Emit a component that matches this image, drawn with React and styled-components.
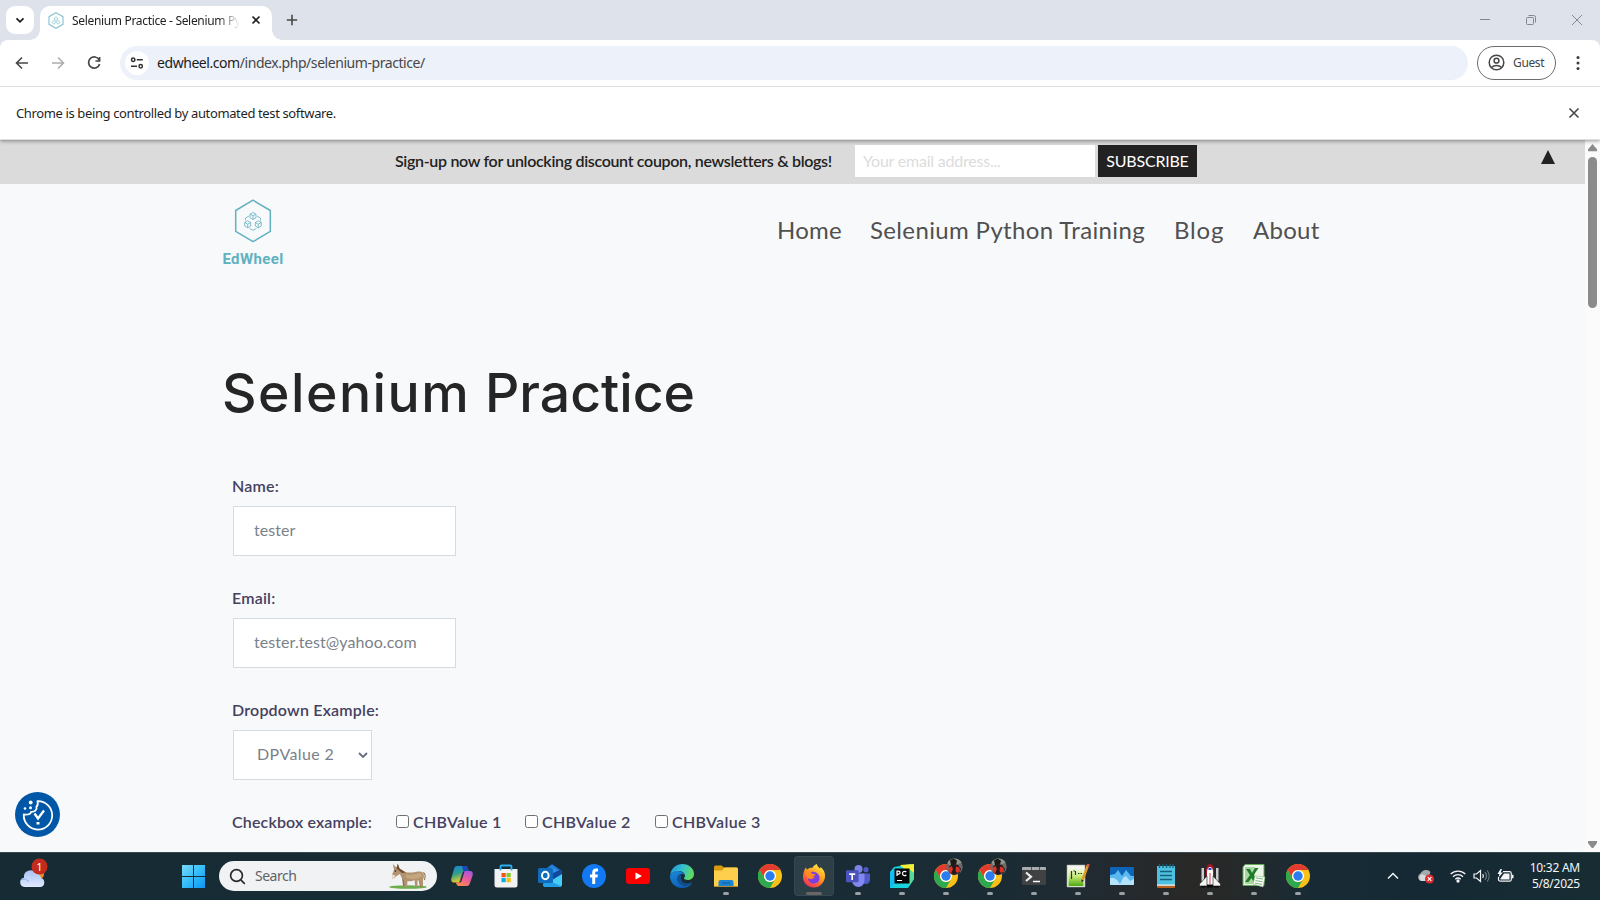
import React from "react";
import styled, { createGlobalStyle } from "styled-components";

const Global = createGlobalStyle`
  *, *::before, *::after { box-sizing: border-box; }
  html, body { margin: 0; padding: 0; overflow: hidden; }
  body { font-family: "Lato", "Liberation Sans", sans-serif; font-variant-ligatures: none; }
  svg { display: block; flex: none; }
`;

const ui = `"Noto Sans", "Open Sans", sans-serif`;

const Screen = styled.div`
  width: 1600px;
  height: 900px;
  display: flex;
  flex-direction: column;
  overflow: hidden;
  background: #f8f9fb;
`;

/* ---------- browser chrome ---------- */

const TabStrip = styled.header`
  height: 40px;
  flex: none;
  display: flex;
  align-items: flex-start;
  padding: 6px 0 0 6px;
  background: #dee2ea;
`;

const TabSearch = styled.button`
  width: 28px;
  height: 28px;
  border: 0;
  padding: 0;
  border-radius: 9px;
  background: #fff;
  display: grid;
  place-items: center;
`;

const Tab = styled.div`
  position: relative;
  width: 232px;
  height: 34px;
  margin-left: 6px;
  padding: 0 8px 6px;
  display: flex;
  align-items: center;
  border-radius: 10px 10px 0 0;
  background: #fff;

  &::before, &::after {
    content: "";
    position: absolute;
    bottom: 0;
    width: 10px;
    height: 10px;
  }
  &::before {
    left: -10px;
    background: radial-gradient(circle at 0 0, transparent 9.5px, #fff 10px);
  }
  &::after {
    right: -10px;
    background: radial-gradient(circle at 100% 0, transparent 9.5px, #fff 10px);
  }
`;

const TabTitle = styled.span`
  width: 167px;
  margin: 1px 0 0 8px;
  white-space: nowrap;
  font: 12px/18px ${ui};
  letter-spacing: -0.33px;
  color: #1f1f1f;
  mask-image: linear-gradient(90deg, #000 146px, transparent 168px);
`;

const TabClose = styled.span`
  margin-left: 12px;
`;

const NewTab = styled.span`
  margin: 8px 0 0 14px;
`;

const WindowButtons = styled.div`
  margin: 8px 17px 0 auto;
  display: flex;
  gap: 34px;
`;

const ToolbarWrap = styled.div`
  position: relative;
  z-index: 2;
  background: #dee2ea;
`;

const Toolbar = styled.div`
  height: 47px;
  display: flex;
  align-items: center;
  padding: 0 12px 1px;
  border-bottom: 1px solid #dcdfe2;
  border-radius: 8px 8px 0 0;
  background: #fff;
`;

const NavButtons = styled.div`
  display: flex;
  gap: 16px;
`;

const Omnibox = styled.div`
  width: 1348px;
  height: 34px;
  margin-left: 16px;
  padding-left: 5px;
  display: flex;
  align-items: center;
  border-radius: 17px;
  background: #ecf1fa;
`;

const SiteInfo = styled.span`
  width: 24px;
  height: 24px;
  border-radius: 50%;
  background: #fff;
  display: grid;
  place-items: center;
`;

const Url = styled.span`
  margin: 1px 0 0 8px;
  font: 14px/20px ${ui};
  letter-spacing: -0.44px;
  color: #474747;

  b { font-weight: 400; color: #1b1b1b; }
`;

const Profile = styled.div`
  width: 79px;
  height: 34px;
  margin-left: 9px;
  padding-left: 10px;
  display: flex;
  align-items: center;
  gap: 8px;
  border: 1px solid #6c6c6c;
  border-radius: 17px;
  font: 12px/18px ${ui};
  letter-spacing: -0.35px;
  color: #444;
`;

const MenuDots = styled.span`
  margin-left: 14px;
`;

const InfoBar = styled.div`
  position: relative;
  z-index: 1;
  height: 53px;
  flex: none;
  padding: 0 18px 1px 16px;
  display: flex;
  align-items: center;
  justify-content: space-between;
  border-bottom: 1px solid #dfe0df;
  background: #fff;
  box-shadow: 0 1px 4px rgba(0, 0, 0, 0.42);
  font: 13px/20px ${ui};
  letter-spacing: -0.37px;
  color: #1f1f1f;
`;

/* ---------- web page ---------- */

const Viewport = styled.div`
  flex: 1;
  min-height: 0;
  display: flex;
`;

const Page = styled.main`
  position: relative;
  width: 1585px;
  display: flex;
  flex-direction: column;
`;

const SignupBar = styled.section`
  height: 44px;
  flex: none;
  display: flex;
  align-items: flex-start;
  padding: 5px 30px 0 395px;
  background: #dbdbdb;
`;

const SignupText = styled.span`
  width: 460px;
  font-size: 16px;
  line-height: 31px;
  font-weight: 600;
  letter-spacing: -0.32px;
  color: #222;
  white-space: nowrap;
`;

const SignupInput = styled.input`
  width: 240px;
  height: 32px;
  border: 0;
  padding: 0 8px 1px;
  background: #fff;
  font: 16px "Lato", sans-serif;
  letter-spacing: -0.21px;

  &::placeholder { color: #dcdcdc; opacity: 1; }
`;

const Subscribe = styled.button`
  width: 99px;
  height: 32px;
  margin-left: 3px;
  border: 0;
  padding: 0 0 2px;
  background: #222;
  color: #fff;
  font: 16px "Lato", sans-serif;
  letter-spacing: -0.22px;
`;

const Collapse = styled.span`
  margin: 5px 0 0 auto;
`;

const SiteHeader = styled.div`
  height: 106px;
  flex: none;
  display: flex;
  justify-content: space-between;
  padding: 15px 265px 0 222px;
`;

const Brand = styled.a`
  display: flex;
  flex-direction: column;
  align-items: center;
  width: 62px;
  font: 700 15px/18px "Roboto", sans-serif;
  letter-spacing: 0.4px;
  color: #61b1c1;

  svg { margin-bottom: 7px; }
`;

const Nav = styled.nav`
  display: flex;
  align-items: center;
  height: 32px;
  margin-top: 14px;
  font-size: 24px;
  color: #505050;
  white-space: nowrap;
`;

const NavLink = styled.a`
  width: ${(p) => p.$width}px;
  letter-spacing: ${(p) => p.$track}px;
`;

const Title = styled.h1`
  display: flex;
  margin: 71px 0 0 222px;
  font: 500 53.5px/64px "Inter", sans-serif;
  color: #252525;
`;

const TitleWord = styled.span`
  width: ${(p) => p.$width}px;
  letter-spacing: ${(p) => p.$track}px;
  white-space: pre;
`;

const Form = styled.form`
  margin: 51px 0 0 233px;
  display: flex;
  flex-direction: column;
  align-items: flex-start;
`;

const Label = styled.label`
  font-size: 16px;
  line-height: 20px;
  font-weight: 600;
  letter-spacing: ${(p) => p.$track || 0.2}px;
  color: #45415f;
  white-space: nowrap;
`;

const Field = styled.div`
  display: flex;
  flex-direction: column;
  align-items: flex-start;
  gap: 10px;
  height: 112px;

  ${Label} { margin-left: -1px; }
`;

const TextBox = styled.input`
  width: 223px;
  height: 50px;
  border: 1px solid #d8dbde;
  padding: 0 19px 3px 20px;
  background: #fff;
  font: 16px "Lato", sans-serif;
  letter-spacing: 0.08px;
  color: #7b818a;
`;

const SelectBox = styled.div`
  width: 139px;
  height: 50px;
  border: 1px solid #d8dbde;
  padding: 0 3px 3px 23px;
  display: flex;
  align-items: center;
  justify-content: space-between;
  background: #fff;
  font-size: 16px;
  letter-spacing: 0.38px;
  color: #7b818a;

  svg { margin-top: 3px; }
`;

const CheckRow = styled.div`
  display: flex;
  align-items: center;
  margin-left: -1px;
`;

const CheckItem = styled.span`
  display: flex;
  align-items: center;
  gap: 4px;
  width: ${(p) => p.$width}px;
`;

const CheckCaption = styled.span`
  width: 164px;
`;

const Box = styled.span`
  width: 13px;
  height: 13px;
  flex: none;
  margin-top: -2px;
  border: 1px solid #6f6f6f;
  border-radius: 2.5px;
  background: #fff;
`;

const CookieButton = styled.div`
  position: absolute;
  left: 15px;
  top: 652px;
  width: 45px;
  height: 45px;
`;

const Scrollbar = styled.div`
  width: 15px;
  padding: 4px 3px 4px;
  display: flex;
  flex-direction: column;
  align-items: center;
  background: #fbfbfc;
`;

const Thumb = styled.div`
  width: 9px;
  height: 151px;
  margin: 5px 0 auto;
  border-radius: 5px;
  background: #8b8b8b;
`;

/* ---------- taskbar ---------- */

const Taskbar = styled.footer`
  height: 48px;
  flex: none;
  display: flex;
  align-items: center;
  padding: 0 19px 1px 18px;
  border-top: 1px solid #3a4a50;
  background: linear-gradient(90deg, #172b35 0, #182c35 640px, #1a2b34 1000px, #222a30 1110px, #292827 1190px, #262929 1230px, #182b35 1310px, #152934 1420px, #172c33 1600px);
`;

const Weather = styled.div`
  width: 164px;
  padding-bottom: 6px;
`;

const SearchPill = styled.div`
  width: 218px;
  height: 30px;
  margin-left: 14px;
  padding: 0 9px 0 10px;
  display: flex;
  align-items: center;
  border-radius: 15px;
  background: #f1f2f4;
  overflow: hidden;

  span {
    margin: 0 auto 0 9px;
    font: 14px/20px ${ui};
    letter-spacing: -0.5px;
    color: #616466;
  }
`;

const Apps = styled.div`
  display: flex;
  margin-left: 5px;
`;

const AppSlot = styled.div`
  position: relative;
  width: 40px;
  height: 40px;
  margin-right: 4px;
  display: grid;
  place-items: center;
  border-radius: 4px;
  background: ${(p) => (p.$active ? "rgba(255,255,255,0.09)" : "transparent")};
  box-shadow: ${(p) => (p.$active ? "inset 0 0 0 1px rgba(255,255,255,0.05)" : "none")};

  &::after {
    content: "";
    display: ${(p) => (p.$running ? "block" : "none")};
    position: absolute;
    bottom: 1px;
    left: 50%;
    width: ${(p) => (p.$active ? 16 : 6)}px;
    height: 3px;
    transform: translateX(-50%);
    border-radius: 2px;
    background: ${(p) => (p.$active ? "#6b6664" : "#9aa0a3")};
  }
`;

const Tray = styled.div`
  margin-left: auto;
  display: flex;
  align-items: center;
`;

const TrayIcon = styled.span`
  margin-right: ${(p) => p.$gap}px;
`;

const Clock = styled.div`
  width: 61px;
  padding: 0 1px 1px 0;
  text-align: right;
  font: 12px/16px ${ui};
  letter-spacing: -0.25px;
  color: #f4f6f7;
`;

/* ---------- drawings ---------- */

const Cubes = ({ size = [38, 44] }) => (
  <svg width={size[0]} height={size[1]} viewBox="0 0 38 44" fill="none" stroke="#61b1c1">
    <path d="M19 1.2 36.3 11.5V32.3L19 42.6 1.7 32.3V11.5Z" strokeWidth="1.5" />
    <g strokeWidth=".8">
      <path d="M19 13.500l3 1.700v3.500L19 20.500l-3-1.800v-3.500zM16 15.200l3 1.700 3-1.700M19 16.900V20.500" />
      <path d="M13.700 21.800l3 1.700v3.500l-3 1.800-3-1.800v-3.500zM10.700 23.500l3 1.700 3-1.700M13.700 25.200v3.600" />
      <path d="M24.300 21.800l3 1.700v3.500l-3 1.800-3-1.800v-3.500zM21.300 23.500l3 1.700 3-1.700M24.300 25.200v3.600" />
      <path d="M15 17l-3.500 2v2.500M23 17l3.500 2v2.500M15.500 29.500L19 31.300l3.500-1.800" />
    </g>
  </svg>
);

const Favicon = () => (
  <svg width="16" height="17" viewBox="0 0 16 17" fill="none" stroke="#8cc6d2">
    <path d="M8 .8L15 4.600v7.800L8 16.200 1 12.400V4.600z" strokeWidth="1.200" />
    <path d="M8 5l1.500 1v1.500L8 8.500 6.500 7.500V6zM5.800 8.500l1.500 1V11l-1.500 1-1.500-1V9.500zM10.200 8.500l1.500 1V11l-1.500 1-1.500-1V9.500z" strokeWidth=".8" />
  </svg>
);

const Stroke = ({ s, d, c = "#474747", w = 1.5, ...rest }) => (
  <svg width={s} height={s} viewBox={`0 0 ${s} ${s}`} fill="none" stroke={c} strokeWidth={w} {...rest}>
    <path d={d} />
  </svg>
);

const Icon = ({ children }) => <svg width="24" height="24" viewBox="0 0 24 24">{children}</svg>;

const ChromeShape = () => (
  <>
    <circle cx="12" cy="12" r="12" fill="#fbc116" />
    <path d="M1.600 6A12 12 0 0 1 22.400 6H12a6 6 0 0 0-5.200 9z" fill="#e33b2e" />
    <path d="M1.600 6A12 12 0 0 0 12 24l5.200-9A6 6 0 0 1 6.800 15z" fill="#2da94f" />
    <circle cx="12" cy="12" r="6" fill="#fff" />
    <circle cx="12" cy="12" r="4.700" fill="#2a7cf0" />
  </>
);

const ChromeIcon = () => <Icon><ChromeShape /></Icon>;

const ChromeProfileIcon = () => (
  <svg width="24" height="24" viewBox="0 0 24 24" overflow="visible">
    <ChromeShape />
    <circle cx="20.500" cy="3" r="8.200" fill="#6f6a66" />
    <path d="M13.500-1.500a8.200 8.200 0 0 1 14.200 0l-3 1.500-5 1-4 1z" fill="#8d9488" />
    <path d="M16-4l4-1.200 3 2-1 4-5 .5z" fill="#1d1719" />
    <path d="M15 2l4-2 5 1 3 4-1.500 4-6 2-4-2.500z" fill="#241a1c" />
    <path d="M14.500 3.500l3-1.500 1.500 3-2 4.500-2-2zM22 2.500l3.500 1 .5 4-3 1.500-1.500-2z" fill="#d8322a" />
  </svg>
);

const CopilotIcon = () => (
  <Icon>
    <defs>
      <linearGradient id="cpa" x1="0" y1="0" x2=".3" y2="1"><stop stopColor="#1685d8" /><stop offset=".5" stopColor="#2f9d8c" /><stop offset="1" stopColor="#e7cf26" /></linearGradient>
      <linearGradient id="cpb" x1=".8" y1="0" x2=".3" y2="1"><stop stopColor="#a457e0" /><stop offset=".5" stopColor="#e85ba0" /><stop offset="1" stopColor="#fb8a4b" /></linearGradient>
    </defs>
    <path d="M7 2h8c2 0 2.500 1.500 3 3l.7 2h-3c-2 0-3 1-3.500 2.500L10 16c-.5 2-1.500 2.500-3.500 2.500H4C1.500 18.500.7 16.500 1.400 14L4 5c.6-2 1.500-3 3-3z" fill="url(#cpa)" />
    <path d="M12 2h3c2 0 2.500 1.500 3 3l.7 2h-3c-1 0-1.700.3-2.300.8z" fill="#1c49bd" />
    <path d="M17 22H9c-2 0-2.500-1.500-3-3l-.2-.6h1c2 0 3-1 3.400-2.500L12.500 9.500C13 7.700 14.500 7 16 7h4c2.500 0 3.300 2 2.600 4.500L20 19c-.6 2-1.500 3-3 3z" fill="url(#cpb)" />
    <path d="M14.500 7.500L11.500 17c-.5 1.500-1.500 1.800-3 1.500 1 0 1.500-1 2-2.600L12.500 9.500c.4-1.200 1-1.800 2-2z" fill="#1c2f3c" />
  </Icon>
);

const StoreIcon = () => (
  <Icon>
    <path d="M6.500 7V2.600C6.500 1.800 7 1.500 7.700 1.500h8.600c.7 0 1.200.3 1.200 1.100V7" fill="none" stroke="#29b0ee" strokeWidth="1.800" />
    <path d="M.5 5h23v16a2.500 2.500 0 0 1-2.500 2.500H3A2.500 2.500 0 0 1 .5 21z" fill="#f2f2f2" />
    <path d="M5.600 5h1.800v1.500H5.600zM16.600 5h1.800v1.500h-1.800z" fill="#29b0ee" />
    <path d="M7.500 9h4.200v4.200H7.500z" fill="#f1511b" /><path d="M12.500 9h4.200v4.200h-4.200z" fill="#80cc28" />
    <path d="M7.500 14h4.200v4.200H7.500z" fill="#00adef" /><path d="M12.500 14h4.200v4.200h-4.200z" fill="#fbbc09" />
  </Icon>
);

const OutlookIcon = () => (
  <Icon>
    <path d="M4 8L13 .8c.7-.5 1.300-.5 2 0L23 6.500c.6.4 1 1 1 1.800V20a3 3 0 0 1-3 3H8a3 3 0 0 1-3-3z" fill="#1d7ad6" />
    <path d="M8 6.500L14 2.500l6 4-8 6z" fill="#2f8fe2" />
    <path d="M10 17L24 9V20a3 3 0 0 1-3 3H8a3 3 0 0 1-3-2.500z" fill="#45cdf5" />
    <path d="M15 9L23 5.500l1 2.500v2l-9 5.500z" fill="#11489c" />
    <path d="M10 16l13 6.200a3 3 0 0 1-2 .8H8a3 3 0 0 1-3-2.500z" fill="#209ee6" />
    <rect x="0" y="4" width="15" height="15" rx="1.500" fill="#0f6cbd" />
    <ellipse cx="7.300" cy="11.500" rx="3.300" ry="3.700" fill="none" stroke="#fff" strokeWidth="2" />
  </Icon>
);

const FacebookIcon = () => (
  <Icon>
    <circle cx="12" cy="12" r="12" fill="#1279f3" />
    <path d="M10.200 20v-6.400H8v-3h2.200V8.700c0-2.900 1.400-4.200 4-4.200.7 0 1.300.1 1.800.2v2.800h-1.300c-1.200 0-1.500.5-1.500 1.600v1.500h2.700l-.5 3h-2.200V20z" fill="#fff" />
  </Icon>
);

const YouTubeIcon = () => (
  <Icon>
    <rect x="0" y="4" width="24" height="16" rx="3" fill="#fd0000" />
    <path d="M9.500 8.500l6.500 3.500-6.500 3.500z" fill="#fff" />
  </Icon>
);

const EdgeIcon = () => (
  <Icon>
    <defs>
      <linearGradient id="ega" x1="0" y1=".2" x2="1" y2=".5"><stop stopColor="#2195d8" /><stop offset=".5" stopColor="#35c1d0" /><stop offset="1" stopColor="#62dc58" /></linearGradient>
      <linearGradient id="egb" x1="0" y1="0" x2=".6" y2="1"><stop stopColor="#1a8ad8" /><stop offset="1" stopColor="#0d5cb4" /></linearGradient>
    </defs>
    <path d="M.2 10.500C1.500 4 6.500 0 12.500 0 19 0 24 4.500 24 10c0 3.500-2.700 6-6 6-2.500 0-4-.8-4-1.700 0-.6 1-1 1-2.700C15 9 12 7 8.500 7 5 7 2 8.500.2 10.500z" fill="url(#ega)" />
    <path d="M0 12c1-3.500 4.500-5.200 8-5 3.600.2 6.500 2 7 4.500-.5-.8-1.500-1.500-3-1.500-3 0-4.500 2.500-4.500 5 0 4 4 6.500 8 6.500 2.500 0 5-.8 6.500-2C20 22.500 16 24 12 24 5 24 0 18.500 0 12z" fill="url(#egb)" />
    <path d="M11 10c-2.500 1-4 3-3.500 5.500.5 4 4 6 8 6 2.500 0 5-.8 6.500-2 .4-.8 0-1.200-.7-.9-5 2-10.300.4-10.300-4.600 0-1.500.5-3 0-4z" fill="#124f92" />
  </Icon>
);

const FolderIcon = () => (
  <Icon>
    <path d="M0 3a1.500 1.500 0 0 1 1.500-1.500h6l2.500 2h12.500A1.500 1.500 0 0 1 24 5v3H0z" fill="#d99a0d" />
    <path d="M0 6.500h8l2.500-3h12A1.500 1.500 0 0 1 24 5v17.500H0z" fill="#fdcf4c" />
    <path d="M4.500 22.500V18a2 2 0 0 1 2-2h11a2 2 0 0 1 2 2v4.500z" fill="#1b84d3" />
    <path d="M8 19h8" stroke="#0a5a9e" strokeWidth="1" />
    <path d="M0 22h24v.8H0z" fill="#c8921a" />
  </Icon>
);

const FirefoxIcon = () => (
  <Icon>
    <defs>
      <linearGradient id="ffa" x1=".8" y1="0" x2=".2" y2="1"><stop stopColor="#fff04a" /><stop offset=".45" stopColor="#ff9a1f" /><stop offset="1" stopColor="#f5245e" /></linearGradient>
    </defs>
    <path d="M2.500 6c.3-1.200.8-2 1.500-2.500.2 1 .6 1.500 1 2C7 4 9 3.700 10.500 3.800 11.500 1.500 13.500.3 15 0c-.3 1.800 1.500 3 3 4.500.3-.5.400-1 .3-1.500C21.500 5 23.300 8.500 23 12.500 22.600 18.500 18 23.500 12 23.500S1 19 1 13c0-2.500.5-4.700 1.500-7z" fill="url(#ffa)" />
    <path d="M9 8c4-1 8.500 1.500 8.500 6S14 19.500 11.500 19.500 6 17.500 6 14c1 1 2.500 1.500 4 1 1-.4 1.700-1.300 2.800-1.600C12 12.500 9.500 12.500 8.500 11.500 8 10.500 8.300 9 9 8z" fill="#7a3fe0" />
    <path d="M3 9c2-1.500 5-1.500 6.500-.5 0 1 1.500 1.700 4 1.800-.2 1.500-2 1.500-3 2.500-.4.600-.2 1.500-1.500 1.700-1.700.2-3-.5-3-.5z" fill="#ff8a22" />
  </Icon>
);

const TeamsIcon = () => (
  <Icon>
    <circle cx="12.500" cy="5" r="4" fill="#7b83eb" />
    <circle cx="20" cy="5.700" r="2.600" fill="#5059c9" />
    <path d="M17 9.500h7v6.500a4 4 0 0 1-6 3.500z" fill="#5059c9" />
    <path d="M6 9.500h12.500v7a6.200 6.200 0 0 1-12.500.5z" fill="#8188ee" />
    <rect x="0" y="6.200" width="12.500" height="12" rx="1" fill="#4b53bc" />
    <path d="M3.200 9.300h6v1.600H7V16H5.400v-5.100H3.200z" fill="#fff" />
  </Icon>
);

const PyCharmIcon = () => (
  <Icon>
    <path d="M4 3L21 0l3 4v11l-6 9H0V8z" fill="#18d3dc" />
    <path d="M10 1L24 0v10l-5-1z" fill="#f5ee35" />
    <path d="M24 9v6l-5 7V5z" fill="#53dc98" />
    <path d="M0 9l5-5v16l-5 4z" fill="#12bdf2" />
    <rect x="4.500" y="4.500" width="15" height="15" fill="#060606" />
    <path d="M7 12V7.200h1.600a1.400 1.400 0 0 1 0 2.900H7M16.300 8a2.200 2.200 0 1 0 0 3M7 16.500h5" fill="none" stroke="#fff" strokeWidth="1.200" />
  </Icon>
);

const TerminalIcon = () => (
  <Icon>
    <rect x="0" y="3" width="24" height="18" rx="1.200" fill="#3f4143" />
    <path d="M0 6V4.200A1.200 1.200 0 0 1 1.200 3h21.600A1.200 1.200 0 0 1 24 4.200V6z" fill="#a9acae" />
    <path d="M9 3h1v3H9zM17 3h1v3h-1z" fill="#55585a" />
    <path d="M4 8.500l5 4.300-5 4.200" fill="none" stroke="#ececec" strokeWidth="2.200" />
    <path d="M11 17.500h7" stroke="#fff" strokeWidth="1.500" />
  </Icon>
);

const EditorIcon = () => (
  <Icon>
    <defs><linearGradient id="npp" x1="0" y1="0" x2="0" y2="1"><stop stopColor="#f5faec" /><stop offset=".45" stopColor="#c8ec78" /><stop offset="1" stopColor="#4ca80e" /></linearGradient></defs>
    <path d="M1 1h18v22H1z" fill="#f3f5f0" stroke="#9fa69a" strokeWidth=".6" />
    <path d="M2.500 4h15v18h-15z" fill="url(#npp)" />
    <path d="M5.500 7v8M7.500 7h1.500M9.500 7v4M12 9.500h1.500M14.500 9.500H16" stroke="#30372a" strokeWidth="1.200" />
    <path d="M22 1l-5.500 15" stroke="#e29a25" strokeWidth="2.600" />
    <path d="M22.500 0l-.8 2.500" stroke="#d35a52" strokeWidth="2.600" />
    <path d="M15.300 15.500l.5 3 2-2z" fill="#3c2d18" />
  </Icon>
);

const MonitorIcon = () => (
  <Icon>
    <rect x="0" y="3" width="24" height="18" rx="1" fill="#0d65b8" />
    <path d="M0 11l5-1 3-4 4 6 4-6 5 6 3 0v8a1 1 0 0 1-1 1H1a1 1 0 0 1-1-1z" fill="#5bb8f1" />
    <path d="M0 14l4 0 3 2 3 4 3-6 3-2 4 5 4-2v5a1 1 0 0 1-1 1H1a1 1 0 0 1-1-1z" fill="#b5e3fb" />
  </Icon>
);

const NotepadIcon = () => (
  <Icon>
    <path d="M3 2h18v20H3z" fill="#4fc1e0" />
    <path d="M3 21h18v2a1 1 0 0 1-1 1H4a1 1 0 0 1-1-1z" fill="#b5601c" />
    <path d="M3 20.500h18v1.300H3z" fill="#f0f4f5" />
    <path d="M5.500 0v4M9 0v4M12.500 0v4M16 0v4M19 0v4" stroke="#14637d" strokeWidth="1.300" />
    <path d="M6 7.500h12M6 11.500h12M6 15.500h12" stroke="#17617c" strokeWidth="1.400" />
  </Icon>
);

const ShuttleIcon = () => (
  <Icon>
    <path d="M3.500 4H6v13H3.500zM18 4h2.500v13H18z" fill="#c9ccd0" />
    <path d="M8 6c0-4 2-6 4-6s4 2 4 6v13H8z" fill="#a3152a" />
    <path d="M9 8c0-3.500 1.500-5 3-5s3 1.500 3 5v13H9z" fill="#fff" />
    <path d="M9 12l-7.500 8v2H9zM15 12l7.500 8v2H15z" fill="#f4f4f4" stroke="#151515" strokeWidth=".6" />
    <path d="M10.500 4h3v2h-3z" fill="#2b48c2" />
    <path d="M12 9v11" stroke="#c93a44" strokeWidth="1" />
    <path d="M9 20.500h6v3H9zM3 22h5v1.500H3zM16 22h5v1.500h-5z" fill="#0b0b0b" />
  </Icon>
);

const ExcelIcon = () => (
  <Icon>
    <path d="M3 .5h19v21H1V3z" fill="#eaf5e6" stroke="#63a95c" strokeWidth="1" />
    <path d="M3 3h10v17H3z" fill="#a7d69f" />
    <path d="M4 5h4l2 4 3-5h3.500l-4.800 7 4 7h-4l-2.200-4-3 4H3l5-7z" fill="#1f7a2c" />
    <path d="M13 12l10 1-2 10-10-3z" fill="#f7faf6" stroke="#8db98a" strokeWidth=".6" />
    <path d="M14 14l7 1M13.500 16.500l7 1.300M13 19l7 1.500" stroke="#72b26f" strokeWidth=".9" />
  </Icon>
);

const WindowsIcon = () => (
  <svg width="23" height="23" viewBox="0 0 23 23">
    <defs><linearGradient id="win" gradientUnits="userSpaceOnUse" x1="0" y1="0" x2="23" y2="23"><stop stopColor="#7ad9fb" /><stop offset=".5" stopColor="#35bdf9" /><stop offset="1" stopColor="#0a94f5" /></linearGradient></defs>
    <path d="M0 0h11v11H0zM12 0h11v11H12zM0 12h11v11H0zM12 12h11v11H12z" fill="url(#win)" />
  </svg>
);

const CloudIcon = () => (
  <svg width="30" height="34" viewBox="0 0 30 34">
    <defs><linearGradient id="cld" x1="0" y1="0" x2="0" y2="1"><stop stopColor="#a9c4f5" /><stop offset="1" stopColor="#dfe8fb" /></linearGradient></defs>
    <circle cx="20" cy="18" r="6" fill="#f08c22" />
    <path d="M6.500 31a4.700 4.700 0 0 1-.5-9.300 6.500 6.500 0 0 1 12-4.200 5 5 0 0 1 5 4.500A4.600 4.600 0 0 1 22 31z" fill="url(#cld)" />
    <path d="M3 23.500a7 7 0 0 1 8 2" stroke="#8eaeea" strokeWidth="1" fill="none" />
    <circle cx="21.500" cy="10.500" r="8" fill="#c42b1c" />
    <text x="21.500" y="14.500" textAnchor="middle" fontFamily="Noto Sans, sans-serif" fontSize="11" fill="#fff">1</text>
  </svg>
);

const DonkeyIcon = () => (
  <svg width="40" height="26" viewBox="0 0 40 26">
    <ellipse cx="20" cy="24" rx="19" ry="1.800" fill="#6fae4e" />
    <path d="M30.500 16l1.500 8h2l.5-8z" fill="#8f7152" />
    <path d="M14 15l1.200 8.500h2.200l.4-7z" fill="#8f7152" />
    <path d="M6 6.500L4.800 1l3.700 3.500L9.800.5 11.500 5.500l6 3.500c4 1.300 9 .2 13-.5 3.500-.5 5.500 1.500 5.500 5L35 17v6.500h-2.200L31 17.500h-1.500v6h-2.300L26.500 17c-2 1.200-5 1.500-7 1l-.5 6h-2.500l-.7-7c-1.800-1.500-3.300-4-3.800-6L8.500 13l-2.500 2.500H4.200L4 12z" fill="#b2936f" />
    <path d="M18 11.500c5 1 9 0 13-1.500 2 0 3 1.500 3 3.500-5 3-12 3-16 1z" fill="#c4a680" />
    <path d="M9.800.8L11.500 5.500l6 4-3.500.5L8.500 5.500z" fill="#6c4e38" />
    <path d="M4 11.500l3.500 1L6 15.500H4.200z" fill="#ecdfcc" />
    <circle cx="7.500" cy="8" r=".8" fill="#2a1d16" />
    <path d="M35 9.500c2.500.5 2.500 4 1.500 7.500" stroke="#94724f" strokeWidth="1.100" fill="none" />
  </svg>
);

const CookieIcon = () => (
  <svg width="45" height="45" viewBox="0 0 45 45">
    <circle cx="22.500" cy="22.500" r="22.500" fill="#0057a8" />
    <path d="M22.500 9.200A14.200 14.200 0 1 1 8.800 22.500c4.500.3 7-.8 7.300-2.700 3.600.2 6.300-1.800 5.300-5 1.300-1 1.600-3.500 1.100-5.600z" fill="none" stroke="#fff" strokeWidth="1.800" strokeLinejoin="round" />
    <path d="M19.500 21.500l3.500 5 6-8" fill="none" stroke="#fff" strokeWidth="2.300" />
    <path d="M21.500 30h3v2.500h-3z" fill="#fff" />
    <circle cx="15.700" cy="10.500" r="1.900" fill="#fff" /><circle cx="10" cy="16.500" r="1.300" fill="#fff" /><circle cx="15.500" cy="15.800" r="1.500" fill="#fff" />
  </svg>
);

const navItems = [
  { text: "Home", width: 93, track: 0.2 },
  { text: "Selenium Python Training", width: 304, track: 0.36 },
  { text: "Blog", width: 79, track: 0.8 },
  { text: "About", width: 67, track: 0.25 },
];

const checks = [
  { text: "CHBValue 1", width: 129 },
  { text: "CHBValue 2", width: 130 },
  { text: "CHBValue 3", width: 130 },
];

const apps = [
  { Art: CopilotIcon }, { Art: StoreIcon }, { Art: OutlookIcon }, { Art: FacebookIcon },
  { Art: YouTubeIcon }, { Art: EdgeIcon }, { Art: FolderIcon, running: true }, { Art: ChromeIcon },
  { Art: FirefoxIcon, running: true, active: true }, { Art: TeamsIcon, running: true },
  { Art: PyCharmIcon, running: true }, { Art: ChromeProfileIcon, running: true },
  { Art: ChromeProfileIcon, running: true }, { Art: TerminalIcon, running: true },
  { Art: EditorIcon, running: true }, { Art: MonitorIcon, running: true },
  { Art: NotepadIcon, running: true }, { Art: ShuttleIcon, running: true },
  { Art: ExcelIcon, running: true }, { Art: ChromeIcon, running: true },
];

export default function App() {
  return (
    <Screen>
      <Global />
      <TabStrip>
        <TabSearch><Stroke s={12} d="M2.500 4.300L6 7.800l3.500-3.500" c="#1f1f1f" w={1.800} /></TabSearch>
        <Tab>
          <Favicon />
          <TabTitle>Selenium Practice - Selenium Py</TabTitle>
          <TabClose><Stroke s={10} d="M1.500 1.500l7 7M8.500 1.500L1.500 8.500" c="#1f1f1f" w={1.600} /></TabClose>
        </Tab>
        <NewTab><Stroke s={12} d="M6 .8v10.400M.8 6h10.400" w={1.600} /></NewTab>
        <WindowButtons>
          <Stroke s={12} d="M1 5.500h10" c="#848689" w={1} />
          <svg width="12" height="12" viewBox="0 0 12 12" fill="none" stroke="#848689">
            <rect x="1.500" y="3.500" width="7" height="7" rx="1" />
            <path d="M3.500 1.500h5.200a1.800 1.800 0 0 1 1.800 1.800V8.500" />
          </svg>
          <Stroke s={12} d="M1 1l10 10M11 1L1 11" c="#848689" w={1} />
        </WindowButtons>
      </TabStrip>
      <ToolbarWrap>
        <Toolbar>
          <NavButtons>
            <Stroke s={20} d="M16 10H5M10 4.500L4.500 10l5.500 5.500" w={1.600} />
            <Stroke s={20} d="M4 10h11M10 4.500l5.500 5.500-5.500 5.500" w={1.600} c="#adadad" />
            <Stroke s={20} d="M15.200 7A5.600 5.600 0 1 0 15.600 11M15.600 4v4h-4.200" w={1.700} />
          </NavButtons>
          <Omnibox>
            <SiteInfo>
              <svg width="14" height="12" viewBox="0 0 14 12" fill="none" stroke="#333" strokeWidth="1.500">
                <circle cx="3.200" cy="2.700" r="1.700" /><path d="M6.800 2.700H12.800M1 9.300h6" /><circle cx="10.700" cy="9.300" r="1.700" />
              </svg>
            </SiteInfo>
            <Url><b>edwheel.com</b>/index.php/selenium-practice/</Url>
          </Omnibox>
          <Profile>
            <svg width="17" height="17" viewBox="0 0 17 17" fill="none" stroke="#474747" strokeWidth="1.500">
              <circle cx="8.500" cy="8.500" r="7.300" /><circle cx="8.500" cy="6.700" r="2.400" /><path d="M3.500 13.500c2.500-2.700 7.500-2.700 10 0" />
            </svg>
            Guest
          </Profile>
          <MenuDots>
            <svg width="16" height="16" viewBox="0 0 16 16" fill="#3c3c3c">
              <circle cx="8" cy="2.500" r="1.500" /><circle cx="8" cy="8" r="1.500" /><circle cx="8" cy="13.500" r="1.500" />
            </svg>
          </MenuDots>
        </Toolbar>
      </ToolbarWrap>
      <InfoBar>
        Chrome is being controlled by automated test software.
        <Stroke s={16} d="M3.500 3.500l9 9M12.500 3.500l-9 9" w={1.600} />
      </InfoBar>

      <Viewport>
        <Page>
          <SignupBar>
            <SignupText>Sign-up now for unlocking discount coupon, newsletters &amp; blogs!</SignupText>
            <SignupInput placeholder="Your email address..." />
            <Subscribe>SUBSCRIBE</Subscribe>
            <Collapse><svg width="14" height="14" viewBox="0 0 14 14"><path d="M7 0l7 14H0z" fill="#222" /></svg></Collapse>
          </SignupBar>
          <SiteHeader>
            <Brand><Cubes />EdWheel</Brand>
            <Nav>
              {navItems.map((n) => <NavLink key={n.text} $width={n.width} $track={n.track}>{n.text}</NavLink>)}
            </Nav>
          </SiteHeader>
          <Title>
            <TitleWord $width={263} $track={1.5}>Selenium </TitleWord>
            <TitleWord $width={215} $track={0}>Practice</TitleWord>
          </Title>
          <Form>
            <Field><Label>Name:</Label><TextBox defaultValue="tester" /></Field>
            <Field><Label>Email:</Label><TextBox defaultValue="tester.test@yahoo.com" /></Field>
            <Field>
              <Label>Dropdown Example:</Label>
              <SelectBox>DPValue 2<Stroke s={10} d="M1 3l4 4 4-4" c="#676f7e" w={1.900} /></SelectBox>
            </Field>
            <CheckRow>
              <CheckCaption><Label $track={0.15}>Checkbox example:</Label></CheckCaption>
              {checks.map((c) => (
                <CheckItem key={c.text} $width={c.width}><Box /><Label $track={0.3}>{c.text}</Label></CheckItem>
              ))}
            </CheckRow>
          </Form>
          <CookieButton><CookieIcon /></CookieButton>
        </Page>
        <Scrollbar>
          <svg width="9" height="8" viewBox="0 0 9 8"><path d="M4.500 0L9 5.200V7.200H0V5.200z" fill="#8b8b8b" /></svg>
          <Thumb />
          <svg width="9" height="7" viewBox="0 0 9 7"><path d="M0 0h9v2L5.200 7H3.800L0 2z" fill="#8b8b8b" /></svg>
        </Scrollbar>
      </Viewport>

      <Taskbar>
        <Weather><CloudIcon /></Weather>
        <WindowsIcon />
        <SearchPill>
          <svg width="17" height="17" viewBox="0 0 17 17" fill="none" stroke="#2b2b2b" strokeWidth="1.700"><circle cx="7.500" cy="7.500" r="5.900" /><path d="M11.800 11.800l4 4" /></svg>
          <span>Search</span>
          <DonkeyIcon />
        </SearchPill>
        <Apps>
          {apps.map(({ Art, running, active }, i) => (
            <AppSlot key={i} $running={running} $active={active}><Art /></AppSlot>
          ))}
        </Apps>
        <Tray>
          <TrayIcon $gap={18}><Stroke s={12} d="M1 8.500l5-5 5 5" c="#f2f4f5" w={1.500} /></TrayIcon>
          <TrayIcon $gap={15}>
            <svg width="18" height="16" viewBox="0 0 18 16">
              <path d="M4 13a4 4 0 0 1-.5-7.500A6 6 0 0 1 13.500 4L12 8l3 5z" fill="#a4a9ab" />
              <path d="M4 13a4 4 0 0 1 1-7l8 4-3 3z" fill="#d6d8d9" />
              <circle cx="12.500" cy="11" r="4.500" fill="#dd2a2f" />
              <path d="M10.700 9.200l3.600 3.600M14.300 9.200l-3.600 3.600" stroke="#fff" strokeWidth="1.200" />
            </svg>
          </TrayIcon>
          <TrayIcon $gap={7}>
            <svg width="16" height="14" viewBox="0 0 16 14" fill="none" stroke="#f4f6f7" strokeWidth="1.300">
              <path d="M.7 5a10.500 10.500 0 0 1 14.600 0M3 7.700a7.200 7.200 0 0 1 10 0M5.300 10.200a4 4 0 0 1 5.400 0" />
              <circle cx="8" cy="12" r="1" fill="#f4f6f7" />
            </svg>
          </TrayIcon>
          <TrayIcon $gap={7}>
            <svg width="17" height="14" viewBox="0 0 17 14" fill="none" stroke="#f4f6f7" strokeWidth="1.200">
              <path d="M1 5h2.500L7.500 1.500v11L3.500 9H1zM9.700 5a3.500 3.500 0 0 1 0 4" />
              <path d="M12 3.200a6 6 0 0 1 0 7.600M14.200 1.500a9 9 0 0 1 0 11" stroke="#6c7a80" />
            </svg>
          </TrayIcon>
          <TrayIcon $gap={6}>
            <svg width="17" height="14" viewBox="0 0 17 14">
              <path d="M6 2.600h6.500a1.800 1.800 0 0 1 1.800 1.800v6a1.800 1.800 0 0 1-1.800 1.800H3.300a1.800 1.800 0 0 1-1.800-1.800V8" fill="none" stroke="#f4f6f7" strokeWidth="1.200" />
              <path d="M7 4.500h5.500v6h-9V9.500zM15 5.700h1.500v3.500H15zM3.500 0L.5 5h2L1.500 8.500 6 3.500H3.700L5 0z" fill="#f4f6f7" />
            </svg>
          </TrayIcon>
          <Clock>10:32 AM<br />5/8/2025</Clock>
        </Tray>
      </Taskbar>
    </Screen>
  );
}
